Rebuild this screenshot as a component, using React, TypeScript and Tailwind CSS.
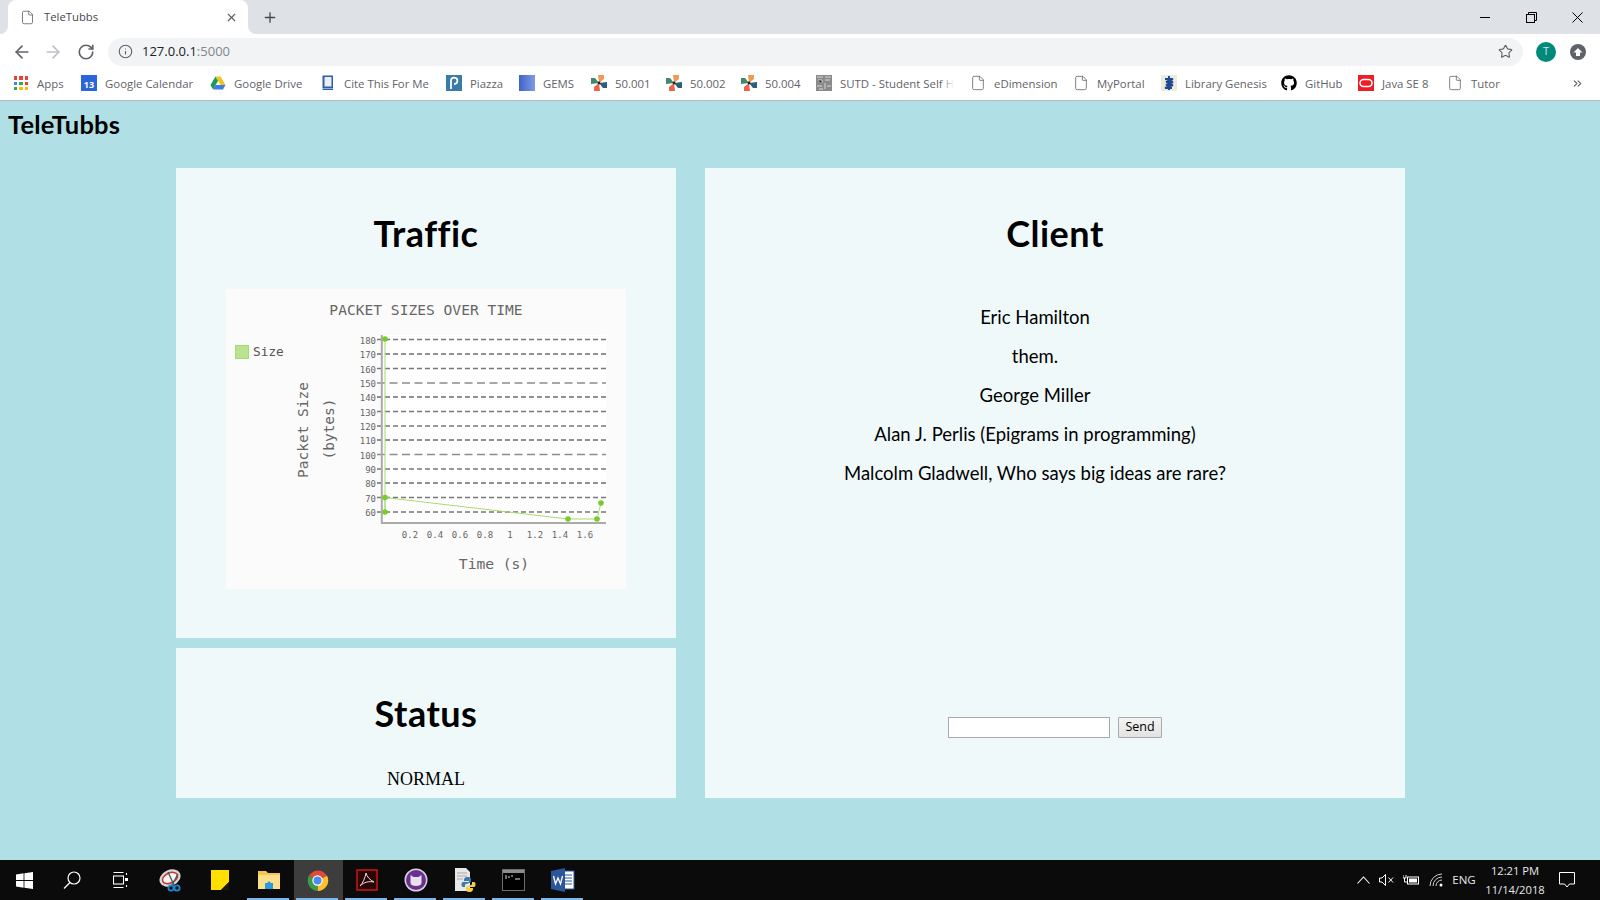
import { ArrowLeft, ArrowRight, ChevronsRight, File, Info, Plus, RotateCw, Star, X } from "lucide-react";
import type { ReactNode } from "react";
import { FaGithub } from "react-icons/fa";

const uiFont = "font-['Open_Sans','Noto_Sans',sans-serif]";

function PageIcon() {
  return <File size={16} strokeWidth={1.2} className="text-[#5f6368]" />;
}

function Pinwheel() {
  return (
    <svg width="16" height="16" viewBox="0 0 16 16">
      <path d="M8 8 L7 0 H13 V4 Z" fill="#ef9a55" />
      <path d="M8 8 L16 7 V13 H12 Z" fill="#2c5f7c" />
      <path d="M8 8 L9 16 H3 V12 Z" fill="#e8654a" />
      <path d="M8 8 L0 9 V3 H4 Z" fill="#3f8a6d" />
      <circle cx="8" cy="8" r="1.4" fill="#222" />
    </svg>
  );
}

const appsDots = ["#ea4335", "#ea4335", "#ea4335", "#4285f4", "#34a853", "#ea4335", "#34a853", "#fbbc05", "#fbbc05"];

const bookmarks: { label: string; width: string; icon: ReactNode }[] = [
  {
    label: "Apps",
    width: "w-[68px]",
    icon: (
      <div className="grid h-[14px] w-[14px] grid-cols-3 gap-[2px]">
        {appsDots.map((c, i) => (
          <span key={i} className="block" style={{ backgroundColor: c }} />
        ))}
      </div>
    ),
  },
  {
    label: "Google Calendar",
    width: "w-[129px]",
    icon: (
      <div className={`flex h-4 w-4 items-end justify-center bg-[#2a66d9] text-[9px] font-bold leading-[12px] text-white ${uiFont}`}>13</div>
    ),
  },
  {
    label: "Google Drive",
    width: "w-[110px]",
    icon: (
      <svg width="16" height="16" viewBox="0 0 16 16">
        <path d="M5.5 1.5 H10.5 L15.5 10 H10.5 Z" fill="#f4c21a" />
        <path d="M5.5 1.5 L8 6 L3 14.5 L0.5 10 Z" fill="#1a9c58" />
        <path d="M5.5 10 H15.5 L13 14.5 H3 Z" fill="#3e7be8" />
      </svg>
    ),
  },
  {
    label: "Cite This For Me",
    width: "w-[126px]",
    icon: (
      <svg width="16" height="16" viewBox="0 0 16 16">
        <path d="M2.5 0.5 H13 V13 H2.5 Z" fill="#2f5da8" />
        <rect x="4.5" y="2" width="7" height="9.5" fill="#e9eef7" />
        <rect x="2.5" y="13.5" width="10.5" height="1.5" fill="#2f5da8" />
      </svg>
    ),
  },
  {
    label: "Piazza",
    width: "w-[73px]",
    icon: (
      <svg width="16" height="16" viewBox="0 0 16 16">
        <rect width="16" height="16" fill="#3a7ca8" />
        <path d="M5 14 V5.5 A3.2 3.2 0 1 1 8 9" fill="none" stroke="#fff" strokeWidth="1.8" />
      </svg>
    ),
  },
  {
    label: "GEMS",
    width: "w-[72px]",
    icon: <div className="h-4 w-4 bg-gradient-to-r from-[#3f64c4] to-[#7f9be6]" />,
  },
  { label: "50.001", width: "w-[75px]", icon: <Pinwheel /> },
  { label: "50.002", width: "w-[75px]", icon: <Pinwheel /> },
  { label: "50.004", width: "w-[75px]", icon: <Pinwheel /> },
  {
    label: "SUTD - Student Self H",
    width: "w-[154px]",
    icon: (
      <svg width="16" height="16" viewBox="0 0 16 16">
        <rect width="16" height="16" fill="#8a8a8a" />
        <path d="M1 2 H7 M9 2 H15 M2 5 H6 V8 M9 5 H14 M1 11 H6 M9 8 V14 M11 11 H15 M3 14 H7" stroke="#d8d8d8" strokeWidth="1" />
      </svg>
    ),
  },
  { label: "eDimension", width: "w-[103px]", icon: <PageIcon /> },
  { label: "MyPortal", width: "w-[88px]", icon: <PageIcon /> },
  {
    label: "Library Genesis",
    width: "w-[120px]",
    icon: (
      <svg width="16" height="16" viewBox="0 0 16 16">
        <rect width="16" height="16" fill="#ecebdd" />
        <path d="M8 1 V15 M4 4 H12 L5 7 H12 L5 10 H12 L4 13 H11" stroke="#1e4b94" strokeWidth="2" fill="none" />
      </svg>
    ),
  },
  { label: "GitHub", width: "w-[77px]", icon: <FaGithub size={16} className="text-black" /> },
  {
    label: "Java SE 8",
    width: "w-[89px]",
    icon: (
      <svg width="16" height="16" viewBox="0 0 16 16">
        <rect width="16" height="16" fill="#ee1c25" />
        <rect x="2" y="4.5" width="12" height="7" rx="3.5" fill="none" stroke="#fff" strokeWidth="1.6" />
      </svg>
    ),
  },
  { label: "Tutor", width: "w-[88px]", icon: <PageIcon /> },
];

function BrowserChrome() {
  return (
    <div className={`shrink-0 ${uiFont}`}>
      {/* tab strip */}
      <div className="flex h-[34px] items-stretch bg-[#dee1e6]">
        <svg width="8" height="34" viewBox="0 0 8 34" className="shrink-0">
          <path d="M0 34 A8 8 0 0 0 8 26 V34 Z" fill="#fff" />
        </svg>
        <div className="flex w-[240px] items-center rounded-t-lg bg-white pl-[12px] pr-[10px]">
          <File size={15} strokeWidth={1.3} className="text-[#5f6368]" />
          <span className="ml-[9px] text-[11.3px] text-[#45494e]">TeleTubbs</span>
          <X size={13} strokeWidth={2.2} className="ml-auto text-[#5f6368]" />
        </div>
        <svg width="8" height="34" viewBox="0 0 8 34" className="shrink-0">
          <path d="M8 34 A8 8 0 0 1 0 26 V34 Z" fill="#fff" />
        </svg>
        <div className="ml-[6px] flex w-[16px] items-center justify-center">
          <Plus size={17} strokeWidth={2} className="text-[#45494e]" />
        </div>
        <div className="ml-auto flex">
          <div className="flex w-[46px] items-center justify-center">
            <div className="h-px w-[10px] bg-black" />
          </div>
          <div className="flex w-[46px] items-center justify-center">
            <svg width="11" height="11" viewBox="0 0 11 11" fill="none" stroke="#000">
              <rect x="0.5" y="2.5" width="8" height="8" />
              <path d="M2.5 2.5 V0.5 H10.5 V8.5 H8.5" />
            </svg>
          </div>
          <div className="flex w-[46px] items-center justify-center">
            <svg width="11" height="11" viewBox="0 0 11 11" stroke="#000">
              <path d="M0.5 0.5 L10.5 10.5 M10.5 0.5 L0.5 10.5" />
            </svg>
          </div>
        </div>
      </div>

      {/* toolbar */}
      <div className="flex h-[33px] items-center bg-white pb-px pl-[12px] pt-[3px]">
        <ArrowLeft size={20} strokeWidth={2} className="text-[#5f6368]" />
        <ArrowRight size={20} strokeWidth={2} className="ml-[11px] text-[#bdc1c6]" />
        <RotateCw size={18} strokeWidth={2.2} className="ml-[14px] text-[#5f6368]" />
        <div className="ml-[13px] flex h-[28px] w-[1415px] items-center rounded-full bg-[#f1f3f4] pl-[10px] pr-[10px]">
          <Info size={15} strokeWidth={1.8} className="text-[#5f6368]" />
          <span className="ml-[9px] pt-px text-[13px] text-[#202124]">
            127.0.0.1<span className="text-[#80868b]">:5000</span>
          </span>
          <Star size={15} strokeWidth={1.8} className="ml-auto text-[#5f6368]" />
        </div>
        <div className="ml-[13px] flex h-5 w-5 items-center justify-center rounded-full bg-[#00897b] text-[11px] text-white/80">T</div>
        <div className="ml-[14px] flex h-4 w-4 items-center justify-center rounded-full bg-[#5f6368]">
          <svg width="10" height="10" viewBox="0 0 10 10">
            <path d="M5 1 L9.5 5.5 H7 V9 H3 V5.5 H0.5 Z" fill="#fff" />
          </svg>
        </div>
      </div>

      {/* bookmarks bar */}
      <div className="flex h-[34px] items-center border-b border-[#b8b9ba] bg-white pl-[13px]">
        {bookmarks.map((b) => (
          <div key={b.label} className={`relative flex shrink-0 items-center overflow-hidden whitespace-nowrap ${b.width}`}>
            <div className="flex w-4 shrink-0 justify-center">{b.icon}</div>
            <span className="ml-2 text-[11.4px] text-[#5f6368]">{b.label}</span>
            {b.label.startsWith("SUTD") && (
              <div className="absolute bottom-0 right-[16px] top-0 w-[14px] bg-gradient-to-r from-white/0 to-white" />
            )}
            {b.label.startsWith("SUTD") && <div className="absolute bottom-0 right-0 top-0 w-[16px] bg-white" />}
          </div>
        ))}
        <ChevronsRight size={13} strokeWidth={2} className="ml-[36px] text-[#5f6368]" />
      </div>
    </div>
  );
}

const gridRows = [
  { v: 180, y: 50.5, kind: "mid" },
  { v: 170, y: 65, kind: "dark" },
  { v: 160, y: 79.5, kind: "mid" },
  { v: 150, y: 94, kind: "long" },
  { v: 140, y: 108, kind: "dark" },
  { v: 130, y: 122.5, kind: "mid" },
  { v: 120, y: 137, kind: "mid" },
  { v: 110, y: 151, kind: "dark" },
  { v: 100, y: 165.5, kind: "long" },
  { v: 90, y: 180, kind: "mid" },
  { v: 80, y: 194, kind: "dark" },
  { v: 70, y: 208.5, kind: "mid" },
  { v: 60, y: 223, kind: "mid" },
];

const xTicks = [
  { t: "0.2", x: 184 },
  { t: "0.4", x: 209 },
  { t: "0.6", x: 234 },
  { t: "0.8", x: 259 },
  { t: "1", x: 284 },
  { t: "1.2", x: 309 },
  { t: "1.4", x: 334 },
  { t: "1.6", x: 359 },
];

const dataPoints = [
  [159, 50],
  [159, 223],
  [159, 208.5],
  [342, 230],
  [371, 230],
  [375, 214],
];

function PacketChart() {
  const mono = "'DejaVu Sans Mono', monospace";
  return (
    <div className="h-[300px] w-[400px] bg-[#fbfbfb]">
      <svg width="400" height="300" viewBox="0 0 400 300" fontFamily={mono}>
        <text x="200" y="26" textAnchor="middle" fontSize="14.6" fill="#666">PACKET SIZES OVER TIME</text>

        <rect x="9.5" y="56.5" width="13" height="13" fill="#b9e38f" stroke="#a5dc6e" />
        <text x="27" y="67" fontSize="12.8" fill="#555">Size</text>

        <text transform="translate(82 141) rotate(-90)" textAnchor="middle" fontSize="14.5" fill="#666">Packet Size</text>
        <text transform="translate(108 140) rotate(-90)" textAnchor="middle" fontSize="14.5" fill="#666">(bytes)</text>

        <rect x="155" y="46" width="225" height="188" fill="#fff" />
        {gridRows.map((r) => (
          <g key={r.v}>
            <text x="150" y={r.y + 4} textAnchor="end" fontSize="9" fill="#666">{r.v}</text>
            <line
              x1="151"
              x2="380"
              y1={r.y}
              y2={r.y}
              stroke={r.kind === "dark" ? "#222" : r.kind === "long" ? "#8c8c8c" : "#777"}
              strokeWidth={r.kind === "dark" ? 1 : 1.5}
              strokeDasharray={r.kind === "long" ? "8 4.5" : "5 3"}
            />
          </g>
        ))}
        <path d="M155.8 46 V234 H380" fill="none" stroke="#aaa" strokeWidth="2" />
        {xTicks.map((t) => (
          <text key={t.t} x={t.x} y="249" textAnchor="middle" fontSize="9" fill="#666">{t.t}</text>
        ))}
        <text x="268" y="280" textAnchor="middle" fontSize="14.6" fill="#666">Time (s)</text>

        <polyline points={dataPoints.map((p) => p.join(",")).join(" ")} fill="none" stroke="#a5dc6e" strokeWidth="1" />
        {dataPoints.map((p, i) => (
          <circle key={i} cx={p[0]} cy={p[1]} r="2.8" fill="#75cc2a" />
        ))}
      </svg>
    </div>
  );
}

const quotes = [
  "Eric Hamilton",
  "them.",
  "George Miller",
  "Alan J. Perlis (Epigrams in programming)",
  "Malcolm Gladwell, Who says big ideas are rare?",
];

const panelTitle = "pt-[43px] pb-px text-[36px] font-bold leading-[44px] tracking-[0.5px] text-black [font-variant-ligatures:none]";

function Panels() {
  return (
    <div className="flex gap-[29px] pl-[176px]">
      <div className="flex w-[500px] flex-col gap-[10px]">
        <section className="flex h-[470px] flex-col items-center bg-[#eff9fa]">
          <h2 className={panelTitle}>Traffic</h2>
          <div className="mt-[33px]">
            <PacketChart />
          </div>
        </section>
        <section className="flex h-[150px] flex-col items-center bg-[#eff9fa]">
          <h2 className={panelTitle}>Status</h2>
          <p className="mt-[30px] font-['Liberation_Serif',serif] text-[18px] leading-[26px] text-black">NORMAL</p>
        </section>
      </div>

      <section className="flex h-[630px] w-[700px] flex-col items-center bg-[#eff9fa] pb-[60px]">
        <h2 className={panelTitle}>Client</h2>
        <ul className="mt-[42px] pr-10 text-center text-[18.5px] leading-[39px] text-black">
          {quotes.map((q) => (
            <li key={q}>{q}</li>
          ))}
        </ul>
        <form className="mt-auto flex items-center gap-2">
          <input className="h-[21px] w-[162px] border border-[#a9a9a9] bg-white" />
          <button
            type="button"
            className="h-[21px] w-[44px] rounded-[1px] border border-[#a9a9a9] bg-gradient-to-b from-[#f4f4f4] to-[#e2e2e2] font-['Open_Sans',sans-serif] text-[12.5px] leading-none text-black"
          >
            Send
          </button>
        </form>
      </section>
    </div>
  );
}

const taskApps: { id: string; icon: ReactNode; active?: boolean }[] = [
  {
    id: "snip",
    icon: (
      <svg width="24" height="24" viewBox="0 0 24 24">
        <ellipse cx="11" cy="10" rx="11" ry="8" transform="rotate(-25 11 10)" fill="#d9d9d9" />
        <ellipse cx="11" cy="10" rx="8" ry="5" transform="rotate(-25 11 10)" fill="#f5f5f5" stroke="#c8362b" strokeWidth="1.5" />
        <path d="M9 4 L15 17 M19 6 L13 17" stroke="#555" strokeWidth="1.4" />
        <circle cx="12" cy="20" r="2.6" fill="none" stroke="#1c8ad0" strokeWidth="1.8" />
        <circle cx="18" cy="20" r="2.6" fill="none" stroke="#1c8ad0" strokeWidth="1.8" />
      </svg>
    ),
  },
  {
    id: "notes",
    icon: (
      <svg width="18" height="20" viewBox="0 0 18 20">
        <path d="M0 0 H18 V12 L10 20 H0 Z" fill="#ffe000" />
        <path d="M18 12 V20 H10 Z" fill="#1a1a1a" />
      </svg>
    ),
  },
  {
    id: "explorer",
    active: true,
    icon: (
      <svg width="22" height="20" viewBox="0 0 22 20">
        <path d="M0 1 H8 L10 3 H22 V19 H0 Z" fill="#f2c94f" />
        <rect y="5" width="22" height="14" fill="#fce08a" />
        <path d="M7 19 V13 H9 L11 11 L13 13 H15 V19 Z" fill="#2a9de0" />
      </svg>
    ),
  },
  {
    id: "chrome",
    active: true,
    icon: (
      <svg width="23" height="23" viewBox="0 0 24 24">
        <path d="M12 12 L3 7 A11 11 0 0 1 22 7 Z" fill="#dd4b39" />
        <path d="M12 12 L22 7 A11 11 0 0 1 12 23 Z" fill="#fbc02d" />
        <path d="M12 12 L12 23 A11 11 0 0 1 3 7 Z" fill="#3d9b48" />
        <circle cx="12" cy="12" r="5.4" fill="#fff" />
        <circle cx="12" cy="12" r="4.2" fill="#4a8bf0" />
      </svg>
    ),
  },
  {
    id: "acrobat",
    active: true,
    icon: (
      <svg width="22" height="22" viewBox="0 0 22 22">
        <rect x="1" y="1" width="20" height="20" fill="#2a0505" stroke="#c4160e" strokeWidth="1.6" />
        <path d="M10 4 C9 9 7 14 4 17 C8 13 13 12 18 13 C14 11 11 8 10 4 Z" fill="none" stroke="#e8e0e0" strokeWidth="1" />
      </svg>
    ),
  },
  {
    id: "github",
    active: true,
    icon: (
      <svg width="24" height="24" viewBox="0 0 24 24">
        <circle cx="12" cy="12" r="11.5" fill="#d8d0e2" />
        <circle cx="12" cy="12" r="10" fill="#68318f" />
        <path d="M6.5 7 L9.5 9 H14.5 L17.5 7 V15 C17.5 17 15 18 12 18 C9 18 6.5 17 6.5 15 Z" fill="#e8e0ef" />
      </svg>
    ),
  },
  {
    id: "python",
    active: true,
    icon: (
      <svg width="24" height="26" viewBox="0 0 24 26">
        <path d="M2 1 H13 L17 5 V24 H2 Z" fill="#e8e8e8" />
        <path d="M4 6 H14 M4 9 H14 M4 12 H10" stroke="#a9a9a9" />
        <path d="M15 10 C11 10 11 12 11 14 H16 V15 H10 C8 15 8 20 10 20 H12 V18 C12 16 18 17 18 14 V12 C18 11 17 10 15 10 Z" fill="#3b78ab" />
        <path d="M16 25 C20 25 20 23 20 21 H15 V20 H21 C23 20 23 15 21 15 H19 V17 C19 19 13 18 13 21 V23 C13 24 14 25 16 25 Z" fill="#f5cf45" />
      </svg>
    ),
  },
  {
    id: "cmd",
    active: true,
    icon: (
      <svg width="23" height="22" viewBox="0 0 23 22">
        <rect x="0.5" y="0.5" width="22" height="21" fill="#000" stroke="#6e6e6e" />
        <rect x="1" y="1" width="21" height="3" fill="#8e8e8e" />
        <path d="M3 7 H5 M3 9 H5 M7 7 V9 M9 7 H11 M13 10 H18" stroke="#ddd" />
      </svg>
    ),
  },
  {
    id: "word",
    active: true,
    icon: (
      <svg width="24" height="24" viewBox="0 0 24 24">
        <rect x="9" y="3" width="14" height="18" fill="#fff" stroke="#2b579a" />
        <path d="M12 7 H21 M12 10 H21 M12 13 H21 M12 16 H21" stroke="#2b579a" />
        <path d="M0 3 L14 0 V24 L0 21 Z" fill="#2b579a" />
        <path d="M2.5 8 L4.5 16 L7 10 L9.5 16 L11.5 8" fill="none" stroke="#fff" strokeWidth="1.3" />
      </svg>
    ),
  },
];

function Taskbar() {
  return (
    <div className={`flex h-10 shrink-0 items-stretch bg-[#0b0b0c] text-white ${uiFont}`}>
      <div className="flex w-12 items-center justify-center">
        <svg width="17" height="17" viewBox="0 0 17 17" fill="#fff">
          <path d="M0 2.4 L7.6 1.3 V8 H0 Z M8.4 1.2 L17 0 V8 H8.4 Z M0 9 H7.6 V15.7 L0 14.6 Z M8.4 9 H17 V17 L8.4 15.8 Z" />
        </svg>
      </div>
      <div className="flex w-12 items-center justify-center">
        <svg width="18" height="18" viewBox="0 0 18 18" fill="none" stroke="#fff" strokeWidth="1.2">
          <circle cx="11" cy="7" r="6" />
          <path d="M7 11.5 L1 17.5" />
        </svg>
      </div>
      <div className="flex w-[51px] items-center justify-center pr-[2px]">
        <svg width="15" height="18" viewBox="0 0 15 18" fill="none" stroke="#fff" strokeWidth="1.1">
          <rect x="0.5" y="5" width="10" height="8" />
          <path d="M0.5 1.5 H10.5 M0.5 16.5 H10.5 M13.5 2 V4 M13.5 14 V16" />
          <rect x="12" y="7" width="3" height="3" fill="#fff" stroke="none" />
        </svg>
      </div>
      {taskApps.map((a) => (
        <div key={a.id} className={`relative flex w-[49px] items-center justify-center pr-[2px] ${a.id === "chrome" ? "bg-[#3d3d3d]" : ""}`}>
          {a.icon}
          {a.active && <div className="absolute bottom-0 left-[2px] right-[5px] h-[2px] bg-[#76b9ed]" />}
        </div>
      ))}

      <div className="ml-auto flex items-center pr-[16px] text-[#e8e8e8]">
        <div className="flex w-[24px] justify-center">
          <svg width="13" height="8" viewBox="0 0 13 8" fill="none" stroke="#fff" strokeWidth="1.1">
            <path d="M0.5 7.5 L6.5 1 L12.5 7.5" />
          </svg>
        </div>
        <div className="flex w-[23px] justify-center">
          <svg width="15" height="12" viewBox="0 0 15 12" fill="none" stroke="#fff" strokeWidth="1">
            <path d="M0.5 4 H3 L6.5 0.5 V11.5 L3 8 H0.5 Z M9.5 3.5 L14 8.5 M14 3.5 L9.5 8.5" />
          </svg>
        </div>
        <div className="flex w-[26px] justify-center">
          <svg width="16" height="12" viewBox="0 0 16 12" fill="none" stroke="#fff">
            <rect x="4.5" y="3" width="11" height="7" />
            <rect x="6" y="4.5" width="8" height="4" fill="#fff" stroke="none" />
            <path d="M0 1 V4 H3 V1 M1.5 4 V8 H4" />
          </svg>
        </div>
        <div className="flex w-[24px] justify-center">
          <svg width="14" height="14" viewBox="0 0 14 14" fill="none" stroke="#cfcfcf">
            <path d="M1 13 A12 12 0 0 1 13 1 M4 13 A9 9 0 0 1 13 4 M7 13 A6 6 0 0 1 13 7" />
            <circle cx="12" cy="12" r="1.5" fill="#fff" stroke="none" />
          </svg>
        </div>
        <div className="flex w-[32px] justify-center text-[11.5px]">ENG</div>
        <div className="flex w-[70px] flex-col items-center text-[11.2px] leading-[19px]">
          <span>12:21 PM</span>
          <span>11/14/2018</span>
        </div>
        <div className="flex w-[34px] justify-center">
          <svg width="16" height="16" viewBox="0 0 16 16" fill="none" stroke="#fff">
            <path d="M0.5 0.5 H15.5 V12 H10.5 L8 15 L5.5 12 H0.5 Z" />
          </svg>
        </div>
      </div>
    </div>
  );
}

export default function App() {
  return (
    <div className="flex h-[900px] w-[1600px] flex-col overflow-hidden bg-[#b0e0e6]">
      <BrowserChrome />
      <main className="flex-1 font-['Lato',sans-serif]">
        <h1 className="pl-2 pt-[7px] pb-px text-[25.5px] font-bold leading-[32px] tracking-[0.2px] text-black">TeleTubbs</h1>
        <div className="mt-[27px]">
          <Panels />
        </div>
      </main>
      <Taskbar />
    </div>
  );
}
